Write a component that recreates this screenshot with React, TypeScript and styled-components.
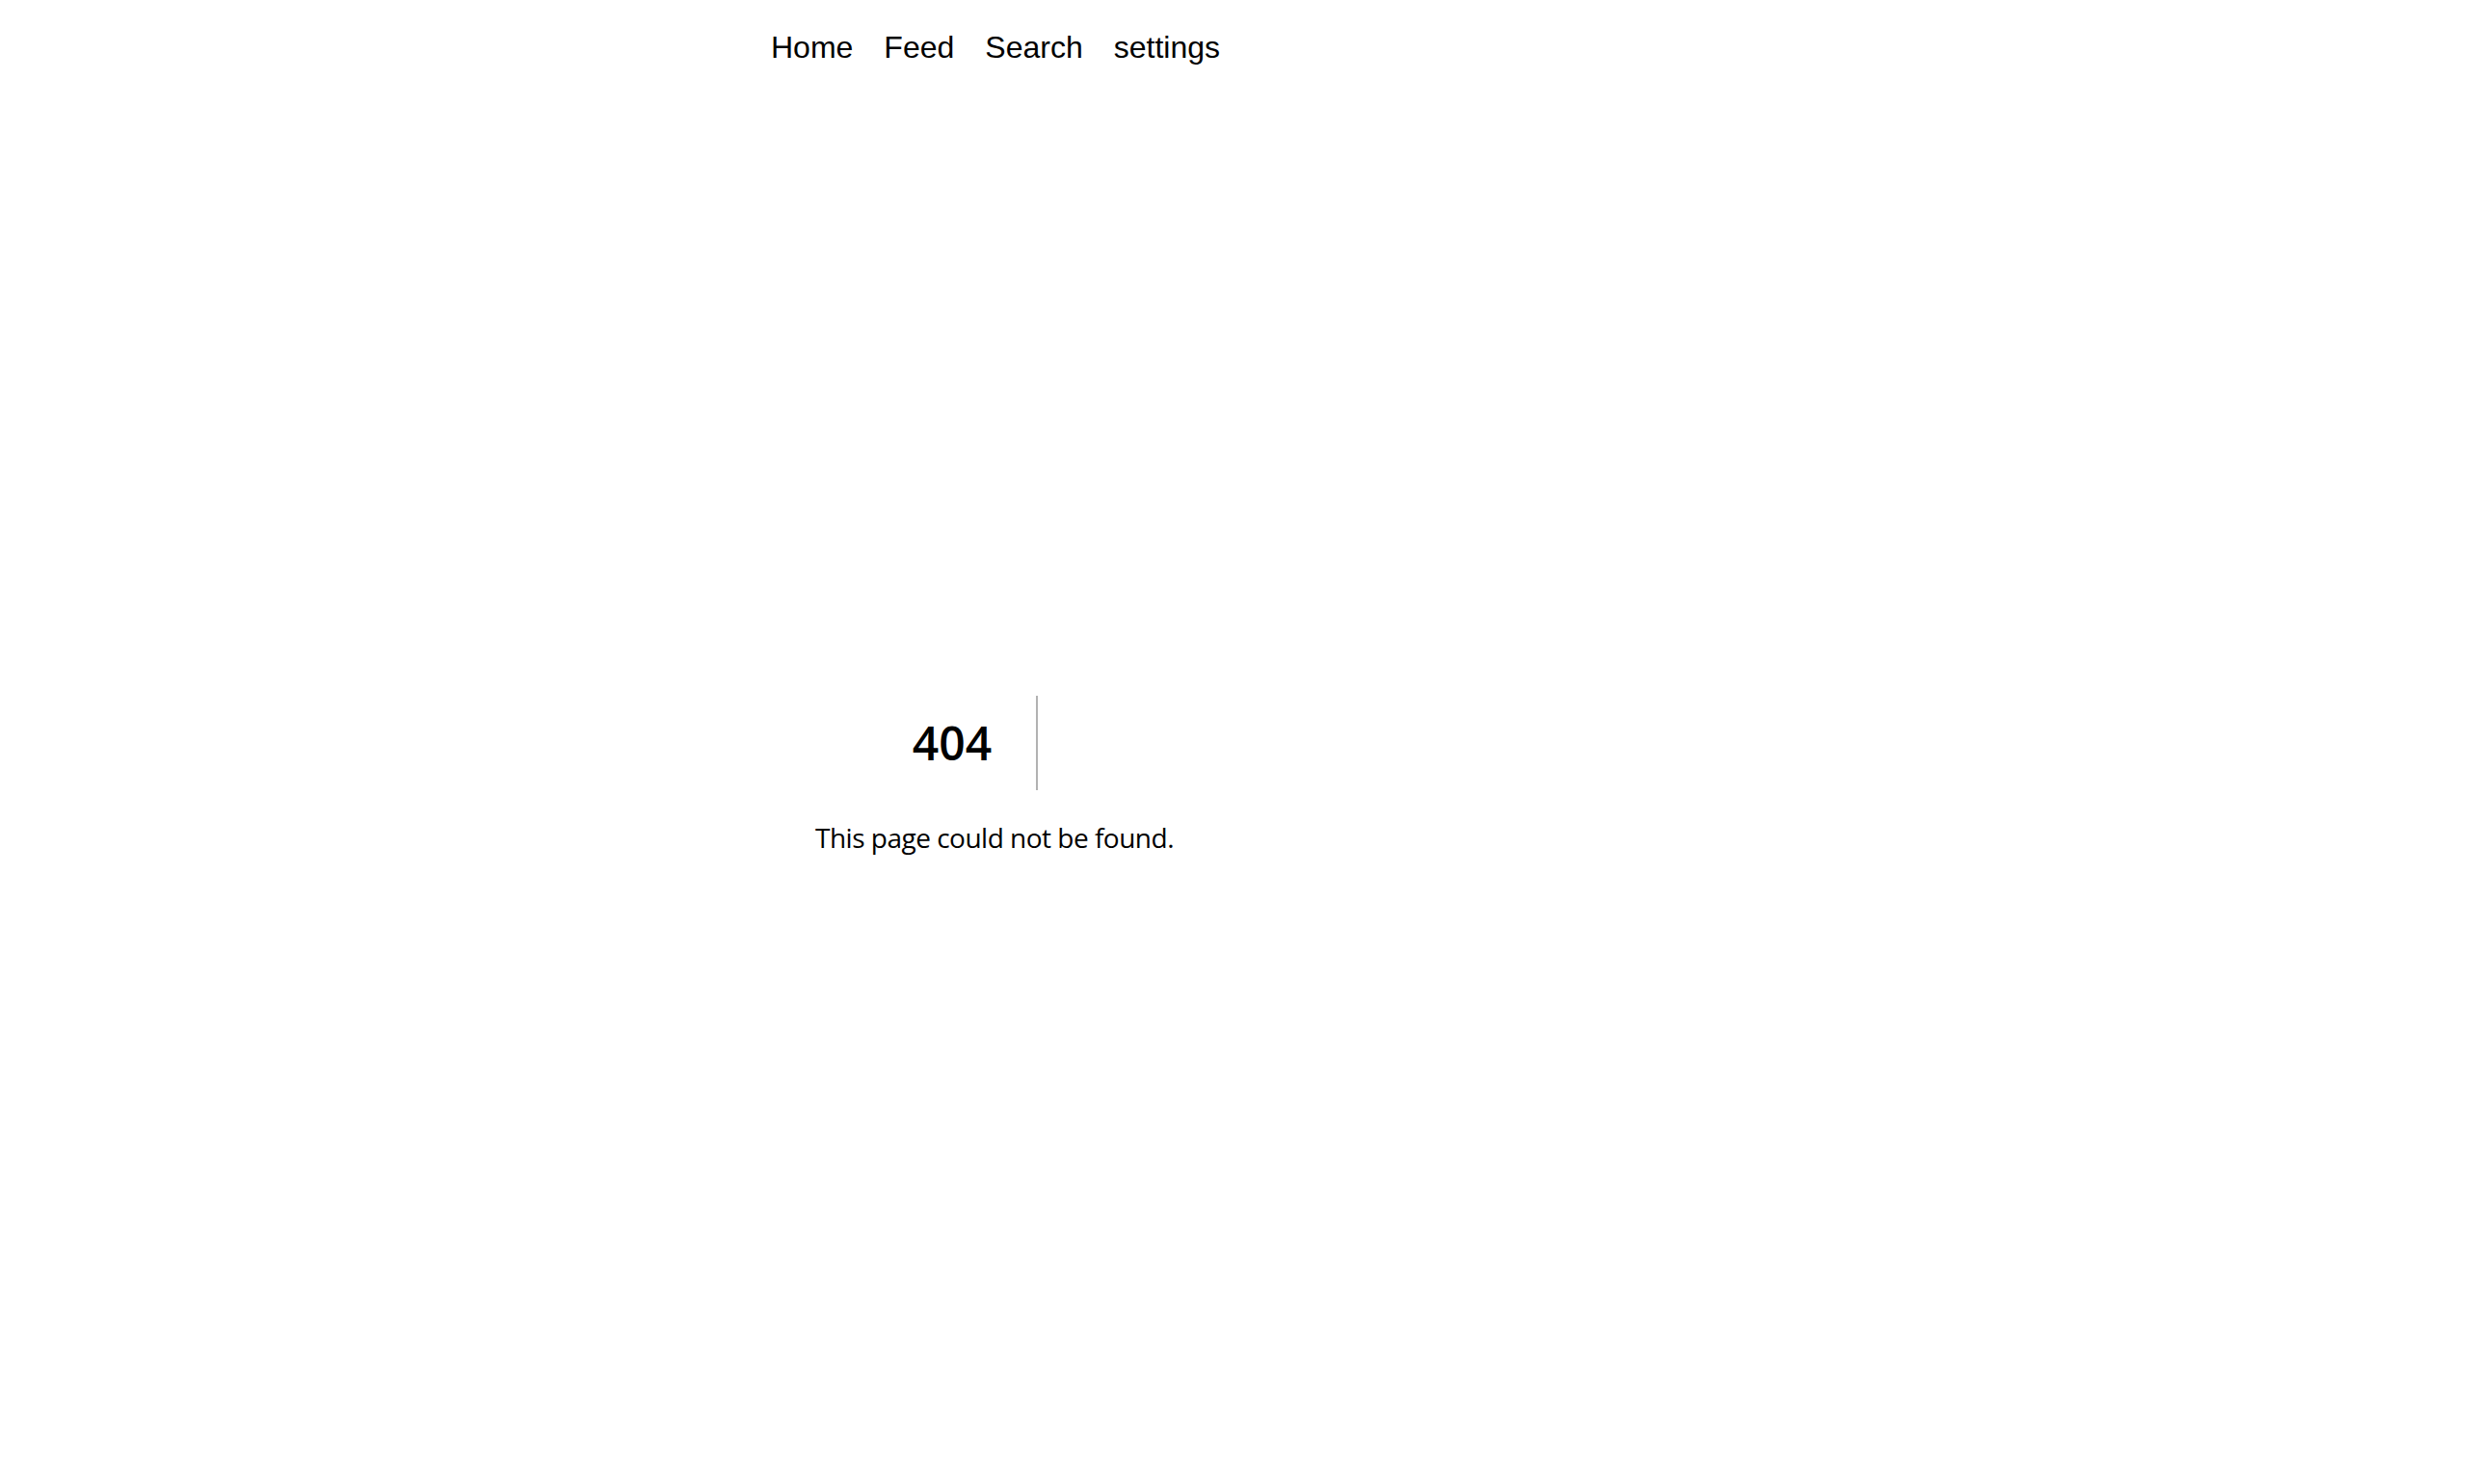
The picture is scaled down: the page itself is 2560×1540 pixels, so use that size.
import React from "react";
import styled, { createGlobalStyle } from "styled-components";

const GlobalStyle = createGlobalStyle`
  html, body {
    margin: 0;
    padding: 0;
    background: #ffffff;
  }
`;

const Nav = styled.nav`
  display: flex;
  gap: 32px;
  height: 67px;
  box-sizing: border-box;
  padding: 31px 0 0 800px;
  font-family: "Liberation Sans", Arial, sans-serif;
  font-size: 32px;
  line-height: 36px;
`;

const NavLink = styled.a`
  color: #000;
  text-decoration: none;
`;

const Main = styled.main`
  margin-left: 800px;
  width: 464px;
  padding-top: 655px;
  text-align: center;
  font-family: "Open Sans", "Noto Sans", sans-serif;
  color: #000;
`;

const Code = styled.h1`
  display: inline-block;
  margin: 0 40px 0 0;
  padding: 0 46px 0 0;
  border-right: 2px solid rgba(0, 0, 0, 0.3);
  font-size: 48px;
  font-weight: 600;
  line-height: 98px;
  vertical-align: top;
`;

const MessageBox = styled.div`
  display: inline-block;
`;

const Message = styled.h2`
  margin: 0;
  font-size: 28px;
  font-weight: 400;
  letter-spacing: -0.5px;
  line-height: 98px;
`;

export default function App() {
  return (
    <>
      <GlobalStyle />
      <Nav>
        <NavLink href="#">Home</NavLink>
        <NavLink href="#">Feed</NavLink>
        <NavLink href="#">Search</NavLink>
        <NavLink href="#">settings</NavLink>
      </Nav>
      <Main>
        <Code>404</Code>
        <MessageBox>
          <Message>This page could not be found.</Message>
        </MessageBox>
      </Main>
    </>
  );
}
